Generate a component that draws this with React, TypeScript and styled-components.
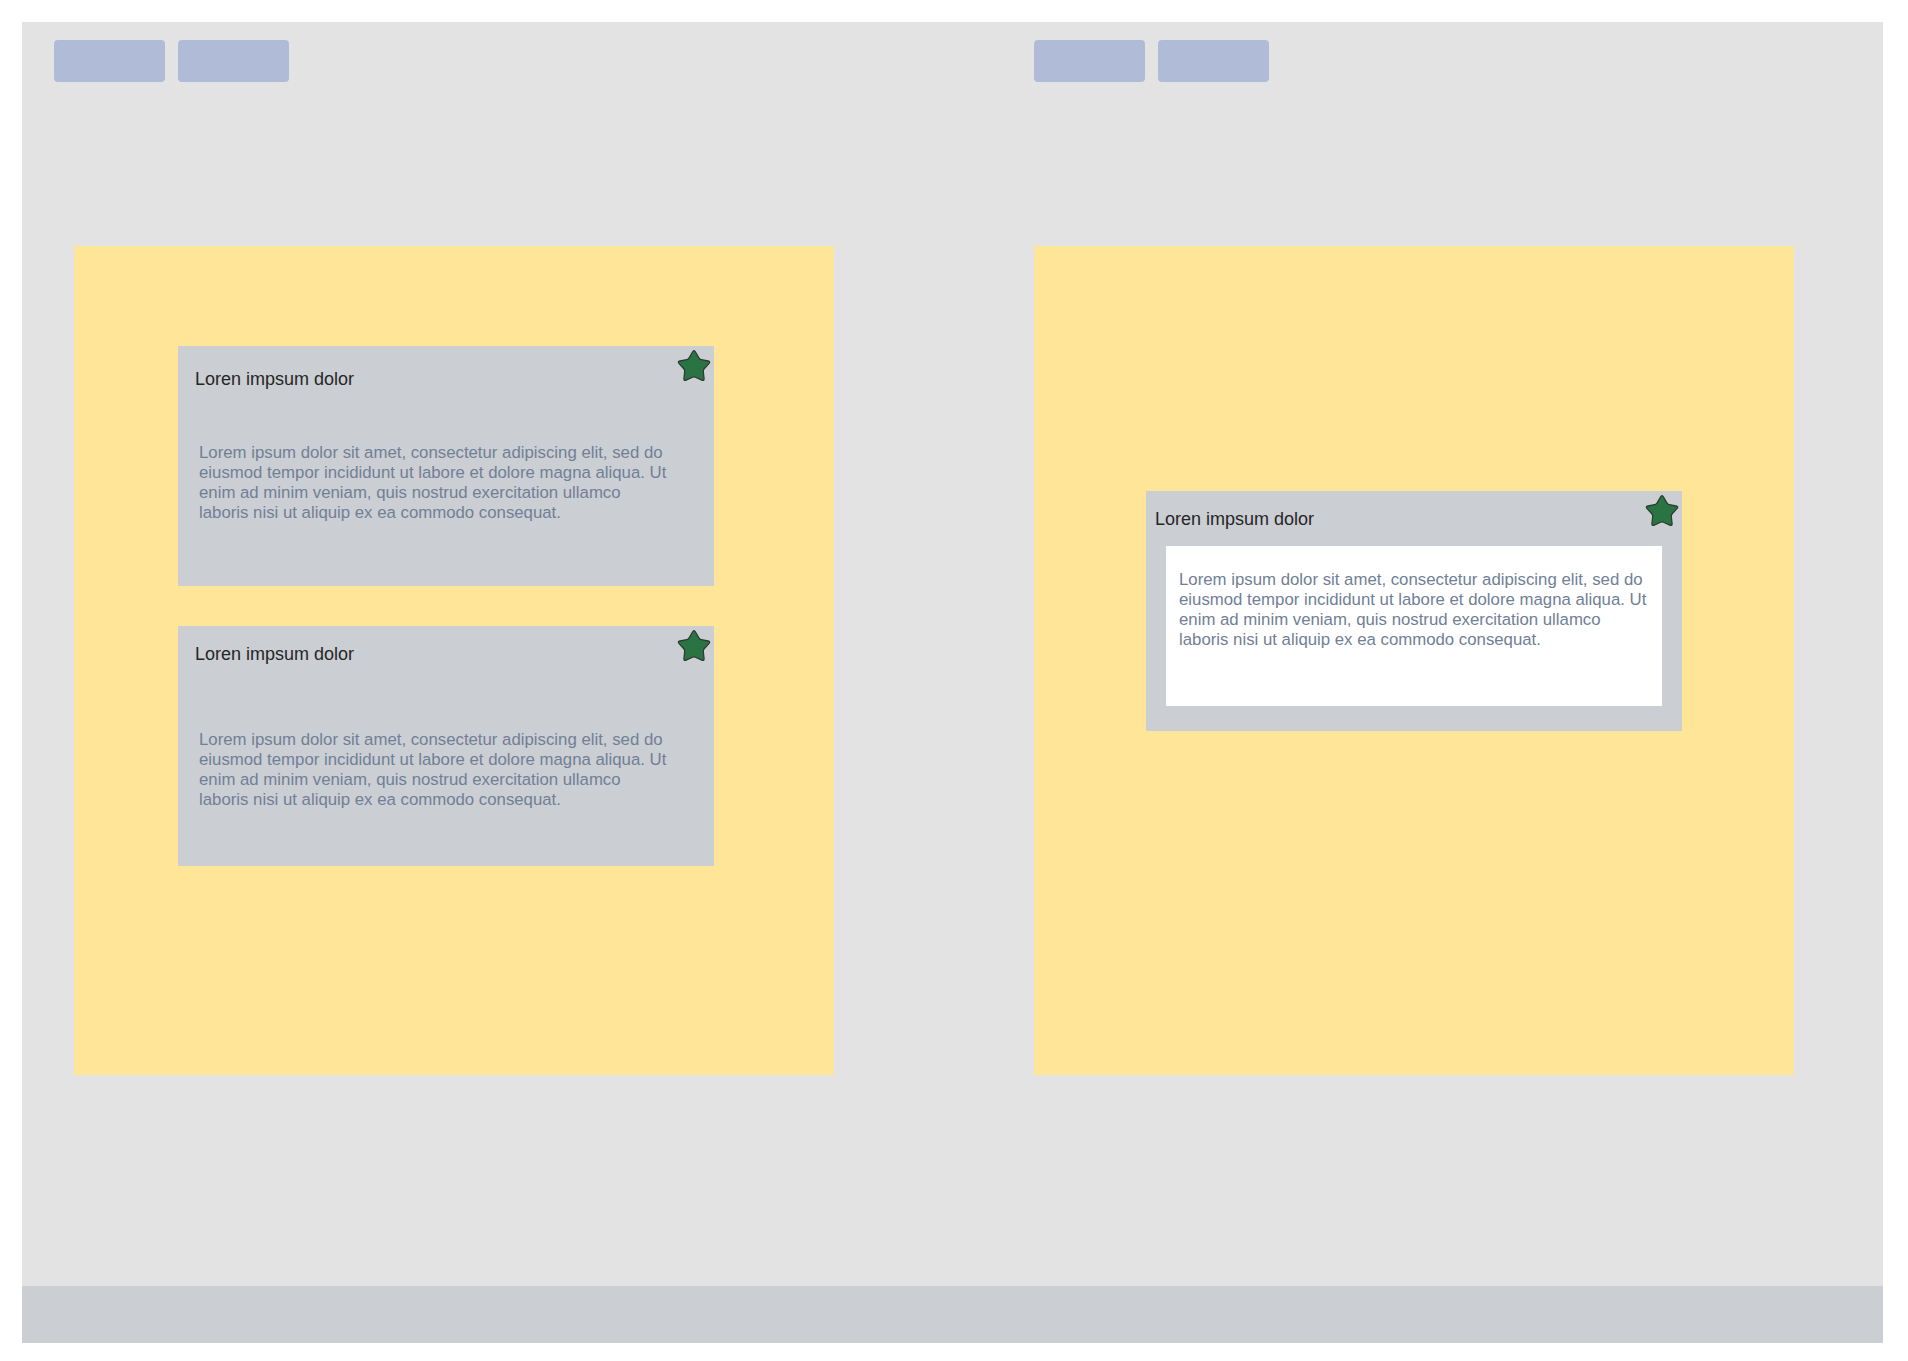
import React from "react";
import styled, { createGlobalStyle } from "styled-components";

const GlobalStyle = createGlobalStyle`
  html, body {
    margin: 0;
    padding: 0;
    background: #ffffff;
  }
  body {
    font-family: "Liberation Sans", Arial, sans-serif;
  }
  * { box-sizing: border-box; }
`;

const Frame = styled.div`
  width: 1861px;
  margin: 22px 25px 18px 22px;
  display: flex;
  flex-direction: column;
`;

const Main = styled.main`
  height: 1264px;
  background: #e3e3e3;
  display: grid;
  grid-template-columns: 980px 1fr;
  padding: 18px 0 0 32px;
`;

const Half = styled.section`
  display: flex;
  flex-direction: column;
  align-items: flex-start;
`;

const ButtonBar = styled.div`
  display: flex;
  gap: 13px;
`;

const ToolButton = styled.button`
  width: 111px;
  height: 42px;
  border: none;
  border-radius: 4px;
  background: #b0bcd7;
  padding: 0;
`;

const Panel = styled.div<{ $offsetLeft: number; $padTop: number; $padLeft: number }>`
  width: 760px;
  height: 829px;
  margin: 164px 0 0 ${(p) => p.$offsetLeft}px;
  padding: ${(p) => p.$padTop}px 0 0 ${(p) => p.$padLeft}px;
  background: #fee597;
  display: flex;
  flex-direction: column;
  gap: 40px;
`;

const Card = styled.div`
  position: relative;
  width: 536px;
  height: 240px;
  background: #cbced3;
  display: flex;
  flex-direction: column;
  align-items: flex-start;
`;

const Title = styled.h3<{ $top: number; $left: number }>`
  margin: ${(p) => p.$top}px 0 0 ${(p) => p.$left}px;
  font-family: "Liberation Sans", Arial, sans-serif;
  font-weight: 400;
  font-size: 18px;
  line-height: normal;
  color: #262626;
`;

const Body = styled.p<{ $top: number }>`
  margin: ${(p) => p.$top}px 0 0 21px;
  width: 472px;
  font-family: "Liberation Sans", Arial, sans-serif;
  font-size: 16.8px;
  line-height: 1.2;
  color: #718096;
`;

const WhiteBox = styled.div`
  margin: 16px 0 0 20px;
  width: 496px;
  height: 160px;
  background: #ffffff;
  padding: 24px 11px 0 13px;
`;

const BoxText = styled.p`
  margin: 0;
  font-family: "Liberation Sans", Arial, sans-serif;
  font-size: 16.8px;
  line-height: 1.2;
  color: #718096;
`;

const StarBadge = styled.svg`
  position: absolute;
  top: 2px;
  right: 2px;
  width: 36px;
  height: 36px;
`;

const Footer = styled.footer`
  height: 57px;
  background: #cbced3;
`;

function starPath(): string {
  const cx = 18;
  const cy = 19;
  const R = 17.6;
  const r = 9.6;
  const pts: [number, number][] = [];
  for (let i = 0; i < 10; i++) {
    const ang = (-90 + i * 36) * (Math.PI / 180);
    const rad = i % 2 === 0 ? R : r;
    pts.push([cx + rad * Math.cos(ang), cy + rad * Math.sin(ang)]);
  }
  const n = pts.length;
  let d = "";
  for (let i = 0; i < n; i++) {
    const v = pts[i];
    const a = pts[(i - 1 + n) % n];
    const b = pts[(i + 1) % n];
    const t = i % 2 === 0 ? 0.24 : 0.14;
    const p1 = [v[0] + (a[0] - v[0]) * t, v[1] + (a[1] - v[1]) * t];
    const p2 = [v[0] + (b[0] - v[0]) * t, v[1] + (b[1] - v[1]) * t];
    d += `${i === 0 ? "M" : "L"}${p1[0].toFixed(2)} ${p1[1].toFixed(2)} Q${v[0].toFixed(2)} ${v[1].toFixed(2)} ${p2[0].toFixed(2)} ${p2[1].toFixed(2)} `;
  }
  return d + "Z";
}

const STAR_D = starPath();

const Star = () => (
  <StarBadge viewBox="0 0 36 36" aria-hidden="true">
    <path d={STAR_D} fill="#2a7443" stroke="#2f3b33" strokeWidth="1.3" strokeLinejoin="round" />
  </StarBadge>
);

const LOREM =
  "Lorem ipsum dolor sit amet, consectetur adipiscing elit, sed do eiusmod tempor incididunt ut labore et dolore magna aliqua. Ut enim ad minim veniam, quis nostrud exercitation ullamco laboris nisi ut aliquip ex ea commodo consequat.";

export default function App() {
  return (
    <>
      <GlobalStyle />
      <Frame>
        <Main>
          <Half>
            <ButtonBar>
              <ToolButton aria-label="button" />
              <ToolButton aria-label="button" />
            </ButtonBar>
            <Panel $offsetLeft={20} $padTop={100} $padLeft={104}>
              <Card>
                <Star />
                <Title $top={23} $left={17}>Loren impsum dolor</Title>
                <Body $top={53}>{LOREM}</Body>
              </Card>
              <Card>
                <Star />
                <Title $top={18} $left={17}>Loren impsum dolor</Title>
                <Body $top={65}>{LOREM}</Body>
              </Card>
            </Panel>
          </Half>
          <Half>
            <ButtonBar>
              <ToolButton aria-label="button" />
              <ToolButton aria-label="button" />
            </ButtonBar>
            <Panel $offsetLeft={0} $padTop={245} $padLeft={112}>
              <Card>
                <Star />
                <Title $top={18} $left={9}>Loren impsum dolor</Title>
                <WhiteBox>
                  <BoxText>{LOREM}</BoxText>
                </WhiteBox>
              </Card>
            </Panel>
          </Half>
        </Main>
        <Footer />
      </Frame>
    </>
  );
}
